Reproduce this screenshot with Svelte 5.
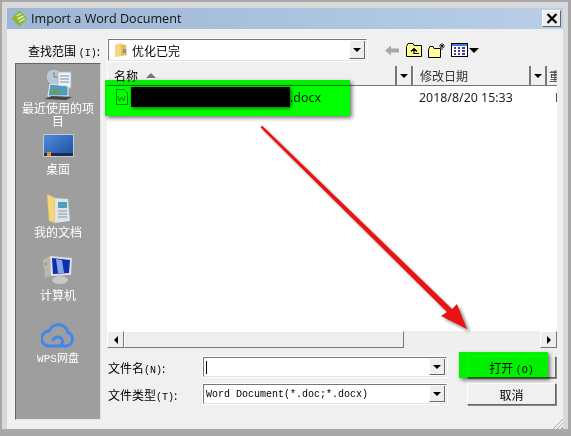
<script>
	// sidebar places, icon drawn per id below
	const places = [
		{ id: 'recent', label: '最近使用的项目' },
		{ id: 'desktop', label: '桌面' },
		{ id: 'docs', label: '我的文档' },
		{ id: 'computer', label: '计算机' },
		{ id: 'cloud', label: 'WPS网盘' }
	];
</script>

<div class="window">
	<div class="titlebar">
		<svg class="logo" width="17" height="17" viewBox="0 0 17 17">
			<path d="M8.5 0.5 L16.5 8.5 L8.5 16.5 L0.5 8.5 Z" fill="#8fb52e" />
			<path d="M5.5 6 L10 3.5 M6.5 9 L12.5 6 M8 12 L14 8.5" stroke="#e4eec4" stroke-width="1.4" fill="none" />
		</svg>
		<span class="title">Import a Word Document</span>
		<button class="close" aria-label="关闭">
			<svg width="12" height="11" viewBox="0 0 12 11"><path d="M1.5 1 L10.5 10 M10.5 1 L1.5 10" stroke="#000" stroke-width="2.2" /></svg>
		</button>
	</div>

	<div class="content">
		<div class="lookin">
			<span class="label lookin-label">查找范围 <i>(I)</i>:</span>
			<div class="combo folder-combo">
				<svg width="14" height="16" viewBox="0 0 14 16">
					<path d="M1 3 L7 1 L7 14 L1 15 Z" fill="#f3d67e" />
					<path d="M7 2 L12 3 L13 13 L7 14 Z" fill="#e9bd55" />
					<path d="M9 7 L12 7 L12 11 L9 11 Z" fill="#7d95b0" />
				</svg>
				<span class="combo-text">优化已完</span>
				<span class="drop"><b class="tri"></b></span>
			</div>
			<div class="tools">
				<svg width="15" height="11" viewBox="0 0 15 11"><path d="M0 5.5 L6 0.5 L6 3.5 L14 3.5 L14 7.5 L6 7.5 L6 10.5 Z" fill="#a8a8a8" /></svg>
				<svg width="16" height="14" viewBox="0 0 16 14">
					<path d="M0.5 3.5 V13.5 H15.5 V2.5 H8 L7 0.5 H2 L1 2.5 Z" fill="#ffff99" stroke="#000" />
					<path d="M5 8.5 L8 5.5 L11 8.5 M8 6 V10.5 H13" stroke="#000" stroke-width="1.2" fill="none" />
				</svg>
				<svg width="17" height="15" viewBox="0 0 17 15">
					<path d="M0.5 6.5 V14.5 H12.5 V5.5 H6 L5 3.5 H2 Z" fill="#ffff99" stroke="#000" />
					<path d="M14 0 V3 M11 3 L17 3 M12 1 L16 5 M16 1 L12 5 M14 4 V7" stroke="#000" stroke-width="0.8" />
				</svg>
				<div class="view-btn">
					<svg width="17" height="14" viewBox="0 0 17 14">
						<rect x="0.5" y="0.5" width="16" height="13" fill="#fff" stroke="#000" />
						<rect x="1" y="1" width="15" height="2" fill="#3b7fd6" />
						<path d="M3 5 H5 M7 5 H9 M11 5 H14 M3 8 H5 M7 8 H9 M11 8 H14 M3 11 H5 M7 11 H9 M11 11 H14" stroke="#00008a" stroke-width="1.5" />
					</svg>
					<b class="tri wide"></b>
				</div>
			</div>
		</div>

		<div class="panes">
			<nav class="places">
				{#each places as p}
					<div class="place {p.id}">
						{#if p.id === 'recent'}
							<svg width="32" height="32" viewBox="0 0 32 32">
								<circle cx="12" cy="9" r="8" fill="#b8c8d4" stroke="#8a9aa6" />
								<path d="M12 4 V9 H16" stroke="#6c7c88" fill="none" />
								<rect x="16" y="4" width="13" height="16" fill="#eef2f5" stroke="#b0b8c0" />
								<path d="M18 8 H27 M18 11 H27 M18 14 H27" stroke="#7b93b0" />
								<path d="M8 16 L26 18 L26 28 L6 28 Z" fill="#4f9ec0" stroke="#eee" />
								<path d="M8 25 L14 20 L20 27 Z" fill="#6c9c56" />
								<path d="M2 31 L10 28 L30 29 L24 32 Z" fill="#444" />
							</svg>
						{:else if p.id === 'desktop'}
							<svg width="31" height="24" viewBox="0 0 31 24">
								<defs>
									<linearGradient id="desk" x1="0" y1="0" x2="1" y2="1">
										<stop offset="0" stop-color="#4f8de0" />
										<stop offset="1" stop-color="#1a4f9e" />
									</linearGradient>
								</defs>
								<rect x="0.5" y="0.5" width="30" height="22" fill="url(#desk)" stroke="#c4c8d0" />
								<rect x="1" y="19" width="29" height="3" fill="#1c2c44" />
								<rect x="4" y="18" width="4" height="4" fill="#e88c2c" />
							</svg>
						{:else if p.id === 'docs'}
							<svg width="25" height="33" viewBox="0 0 25 33">
								<path d="M1 2 L9 6 L9 31 L3 29 Z" fill="#f3d67e" stroke="#d8b45a" stroke-width="0.5" />
								<path d="M9 6 L22 7 L24 29 L9 31 Z" fill="#dfe4e8" />
								<rect x="12" y="10" width="9" height="6" fill="#4f9ec0" />
								<path d="M12 19 H21 M12 22 H21 M12 25 H21" stroke="#8a98a6" />
							</svg>
						{:else if p.id === 'computer'}
							<svg width="32" height="30" viewBox="0 0 32 30">
								<path d="M1 5 L8 1 L9 21 L3 23 Z" fill="#b8b8b0" />
								<path d="M8 1 L30 3 L29 20 L9 21 Z" fill="#e0e0e0" />
								<path d="M10 3 L28 5 L27 18 L11 19 Z" fill="#0b2fb0" />
								<path d="M14 4 L20 5 L22 18 L16 18 Z" fill="#8aa6e8" />
								<ellipse cx="18" cy="25" rx="8" ry="4" fill="#c8c8c8" />
								<rect x="3" y="8" width="2" height="2" fill="#5fc040" />
							</svg>
						{:else}
							<svg width="34" height="26" viewBox="0 0 34 26">
								<path d="M11 24 H25 A7 7 0 0 0 27 10.5 A10 10 0 0 0 8 9 A7.5 7.5 0 0 0 8 24 H17 A4.5 4.5 0 0 0 17 15 C14.5 15 13 16.5 12 18" fill="none" stroke="#3f86f0" stroke-width="3" stroke-linecap="round" />
							</svg>
						{/if}
						<span>{p.label}</span>
					</div>
				{/each}
			</nav>

			<div class="browser">
				<div class="list">
					<div class="list-head">
						<div class="col name">名称<b class="sort"></b></div>
						<span class="col-drop"><b class="tri"></b></span>
						<div class="col date">修改日期</div>
						<span class="col-drop"><b class="tri"></b></span>
						<div class="col rest">重</div>
					</div>
					<div class="list-row">
						<div class="file">
							<svg width="13" height="16" viewBox="0 0 13 16"><path d="M1.5 0.5 H9 L12.5 4 V15.5 H1.5 Z" fill="none" stroke="#158a1c" /><path d="M3 7 L4.5 12 L6.5 8 L8.5 12 L10 7" fill="none" stroke="#158a1c" /></svg>
							<span class="fname">.docx</span>
						</div>
						<div class="fdate">2018/8/20 15:33</div>
						<div class="frest">D</div>
					</div>
				</div>
				<div class="hscroll">
					<span class="sbtn"><b class="tri-l"></b></span>
					<span class="thumb"></span>
					<span class="track"></span>
					<span class="sbtn"><b class="tri-r"></b></span>
				</div>
				<div class="form">
					<div class="fields">
						<div class="field">
							<span class="label">文件名<i>(N)</i>:</span>
							<div class="combo small"><span class="caret"></span><span class="drop"><b class="tri"></b></span></div>
						</div>
						<div class="field">
							<span class="label">文件类型<i>(T)</i>:</span>
							<div class="combo small"><span class="mono">Word Document(*.doc;*.docx)</span><span class="drop"><b class="tri"></b></span></div>
						</div>
					</div>
					<div class="buttons">
						<button class="btn">打开 <i>(O)</i></button>
						<button class="btn">取消</button>
					</div>
				</div>
			</div>
		</div>
		<div class="grip"></div>
	</div>

	<!-- annotations painted over the screenshot -->
	<div class="mark mark-row"></div>
	<div class="mark-black"></div>
	<div class="mark mark-open"></div>
	<svg class="arrow" width="571" height="436" viewBox="0 0 571 436">
		<defs>
			<filter id="soft" x="-10%" y="-10%" width="120%" height="120%"><feGaussianBlur stdDeviation="1.5" /></filter>
		</defs>
		<g transform="translate(3 3)" opacity="0.4" filter="url(#soft)">
			<path d="M262 125.5 L452 309 L457 304 L467 329 L441 316 L447 312 L260.5 127.5 Z" fill="#000" />
		</g>
		<path d="M262 125.5 L452 309 L457 304 L467 329 L441 316 L447 312 L260.5 127.5 Z" fill="#e81414" />
	</svg>
</div>

<style>
	:global(body) {
		margin: 0;
		background: #fff;
	}

	.window {
		position: relative;
		width: 571px;
		height: 436px;
		box-sizing: border-box;
		overflow: hidden;
		background: #d9d9d9;
		border: 2px solid #a8a8a8;
		border-bottom-width: 7px;
		border-right-width: 3px;
		padding: 6px 5px 0 5px;
		display: flex;
		flex-direction: column;
		font-family: "Noto Sans CJK SC", sans-serif;
		font-size: 12px;
		color: #000;
	}

	.titlebar {
		height: 21px;
		flex: none;
		display: flex;
		align-items: center;
		gap: 3px;
		padding-left: 4px;
		background: linear-gradient(90deg, #9db6d4, #b9cfe8);
	}

	.title {
		font-family: "Open Sans", sans-serif;
		font-size: 12.6px;
		color: #111;
	}

	.close {
		margin-left: auto;
		margin-right: 2px;
		width: 19px;
		height: 17px;
		padding: 0;
		display: flex;
		align-items: center;
		justify-content: center;
		background: #eee;
		border: 1px solid;
		border-color: #fff #666 #666 #fff;
	}

	.content {
		position: relative;
		flex: 1;
		background: #f0f0f0;
		padding: 10px 6px 0 8px;
		display: flex;
		flex-direction: column;
	}

	i {
		font-family: "Liberation Mono", monospace;
		font-style: normal;
		font-size: 10px;
	}

	.lookin {
		display: flex;
		align-items: center;
		height: 22px;
	}

	.lookin-label {
		width: 80px;
		flex: none;
		margin-left: 13px;
		white-space: nowrap;
	}

	.combo {
		position: relative;
		box-sizing: border-box;
		background: #fff;
		display: flex;
		align-items: center;
		border: 1px solid #777;
		border-right-color: #e4e4e4;
		border-bottom-color: #e4e4e4;
		outline: 1px solid #fff;
		outline-offset: 0;
	}

	.folder-combo {
		width: 259px;
		height: 22px;
		padding-left: 5px;
		gap: 4px;
	}

	.drop {
		position: absolute;
		right: 1px;
		top: 1px;
		bottom: 1px;
		width: 16px;
		display: flex;
		align-items: center;
		justify-content: center;
		background: #eee;
		border-right: 1px solid #666;
		border-bottom: 1px solid #666;
		border-left: 1px solid #fff;
		box-sizing: border-box;
	}

	.tri {
		width: 0;
		height: 0;
		border-left: 4px solid transparent;
		border-right: 4px solid transparent;
		border-top: 4px solid #000;
	}

	.tri.wide {
		border-left-width: 5px;
		border-right-width: 5px;
		border-top-width: 5px;
	}

	.tools {
		display: flex;
		align-items: center;
		gap: 6px;
		margin-left: 18px;
	}

	.view-btn {
		display: flex;
		align-items: center;
		gap: 1px;
	}

	.panes {
		flex: 1;
		display: flex;
		margin-top: 2px;
	}

	.places {
		box-sizing: border-box;
		flex: none;
		width: 86px;
		height: 357px;
		background: #9e9e9e;
		border: 1px solid #e4e4e4;
		border-top: 1px solid #666;
		border-left: 1px solid #666;
		display: flex;
		flex-direction: column;
		align-items: center;
		color: #fff;
		padding-top: 4px;
	}

	.place {
		display: flex;
		flex-direction: column;
		align-items: center;
		text-align: center;
		width: 78px;
		line-height: 13px;
	}

	.place span {
		margin-top: 1px;
	}

	.recent { height: 66px; }
	.desktop { height: 58px; }
	.desktop span { margin-top: 4px; }
	.docs { height: 63px; }
	.docs span { margin-top: 0; }
	.computer { height: 65px; }
	.computer span { margin-top: 3px; }
	.cloud { padding-top: 2px; }
	.cloud span { font-family: "Liberation Mono", "Noto Sans CJK SC", monospace; font-size: 11px; margin-top: 5px; }

	.browser {
		flex: 1;
		min-width: 0;
		display: flex;
		flex-direction: column;
		margin-left: 6px;
		padding-top: 3px;
	}

	.list {
		height: 265px;
		background: #fff;
		overflow: hidden;
	}

	.list-head {
		display: flex;
		height: 20px;
		background: #f0f0f0;
		border-bottom: 1px solid #777;
		box-sizing: border-box;
	}

	.col {
		box-sizing: border-box;
		display: flex;
		align-items: center;
		padding-left: 6px;
		border-right: 2px solid #777;
		border-left: 1px solid #fff;
		overflow: hidden;
		flex: none;
	}

	.col.name { width: 290px; }
	.col.date { width: 118px; color: #333; }
	.col.rest { width: 10px; border: 0; padding-left: 2px; color: #333; }

	.col-drop {
		flex: none;
		width: 16px;
		display: flex;
		align-items: center;
		justify-content: center;
		border-right: 2px solid #777;
		box-sizing: border-box;
	}

	.sort {
		width: 0;
		height: 0;
		margin-left: 8px;
		border-left: 5px solid transparent;
		border-right: 5px solid transparent;
		border-bottom: 5px solid #777;
	}

	.list-row {
		display: flex;
		align-items: center;
		height: 22px;
		font-family: "Noto Sans", sans-serif;
		font-size: 12.4px;
		color: #222;
	}

	.file {
		width: 312px;
		flex: none;
		display: flex;
		align-items: center;
		padding-left: 8px;
		box-sizing: border-box;
	}

	.fname { margin-left: 162px; }
	.fdate { width: 136px; flex: none; }
	.frest { width: 2px; flex: none; overflow: hidden; }

	.hscroll {
		display: flex;
		height: 17px;
		box-sizing: border-box;
	}

	.sbtn {
		width: 17px;
		flex: none;
		box-sizing: border-box;
		display: flex;
		align-items: center;
		justify-content: center;
		background: #eee;
		border: 1px solid;
		border-color: #fff #777 #777 #fff;
	}

	.thumb {
		width: 280px;
		flex: none;
		box-sizing: border-box;
		background: #eee;
		border: 1px solid;
		border-color: #fff #777 #777 #fff;
	}

	.track {
		flex: 1;
		background: repeating-conic-gradient(#f6f6f6 0 25%, #e8e8e8 0 50%) 0 0 / 2px 2px;
	}

	.tri-l, .tri-r {
		width: 0;
		height: 0;
		border-top: 4px solid transparent;
		border-bottom: 4px solid transparent;
	}

	.tri-l { border-right: 4px solid #000; }
	.tri-r { border-left: 4px solid #000; }

	.form {
		display: flex;
		margin-top: 9px;
	}

	.fields {
		display: flex;
		flex-direction: column;
		gap: 7px;
		width: 360px;
		flex: none;
	}

	.field {
		display: flex;
		align-items: center;
		height: 20px;
	}

	.field .label {
		width: 96px;
		flex: none;
		padding-left: 1px;
		box-sizing: border-box;
	}

	.small {
		width: 244px;
		height: 20px;
		padding-left: 2px;
	}

	.caret {
		width: 1px;
		height: 13px;
		background: #000;
	}

	.mono {
		font-family: "Liberation Mono", monospace;
		font-size: 10px;
		white-space: pre;
	}

	.buttons {
		display: flex;
		flex-direction: column;
		gap: 5px;
		margin-top: -1px;
	}

	.btn {
		width: 89px;
		height: 22px;
		padding: 0;
		font: inherit;
		background: #f0f0f0;
		border: 1px solid;
		border-color: #fff #666 #666 #fff;
		color: #000;
		box-shadow: 1px 1px 0 #888;
	}

	.grip {
		position: absolute;
		right: 0;
		bottom: 0;
		width: 11px;
		height: 11px;
		background: repeating-linear-gradient(135deg, transparent 0 2px, #aaa 2px 3px);
		clip-path: polygon(100% 0, 100% 100%, 0 100%);
	}

	/* green highlighter strokes, multiplied so the text below stays readable */
	.mark {
		position: absolute;
		background: #00ff00;
		mix-blend-mode: multiply;
		box-shadow: 2px 2px 4px rgba(0, 0, 0, 0.55);
	}

	.mark-row { left: 103px; top: 78px; width: 245px; height: 36px; }
	.mark-open { left: 457px; top: 350px; width: 89px; height: 26px; }

	.mark-black {
		position: absolute;
		left: 129px;
		top: 85px;
		width: 159px;
		height: 20px;
		background: #000;
		box-shadow: 1px 1px 4px rgba(0, 0, 0, 0.6);
		z-index: 1;
	}

	.arrow {
		position: absolute;
		left: -2px;
		top: -2px;
		pointer-events: none;
		z-index: 2;
	}
</style>
